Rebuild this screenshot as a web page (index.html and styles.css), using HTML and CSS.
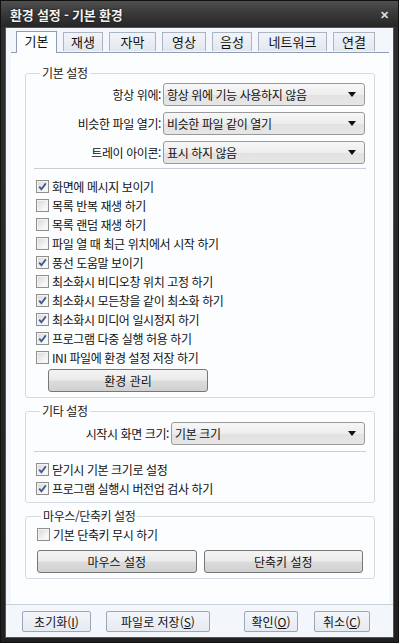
FILE: index.html
```html
<!DOCTYPE html>
<html lang="ko">
<head>
    <meta charset="UTF-8">
    <meta name="viewport" content="width=device-width, initial-scale=1.0">
    <title>환경 설정 - 기본 환경</title>
    <link rel="stylesheet" href="styles.css">
</head>
<body>

    <div class="window">
        <div class="titlebar">
            <span class="title">환경 설정 - 기본 환경</span>
            <span class="close">&#x2715;</span>
        </div>

        <div class="client">
            <div class="tabs">
                <div class="tab active">기본</div>
                <div class="tab">재생</div>
                <div class="tab">자막</div>
                <div class="tab">영상</div>
                <div class="tab">음성</div>
                <div class="tab">네트워크</div>
                <div class="tab">연결</div>
            </div>

            <div class="panel">
                <fieldset class="group group-basic">
                    <legend>기본 설정</legend>
                    <div class="field">
                        <label>항상 위에:</label>
                        <div class="select">항상 위에 기능 사용하지 않음<svg class="arrow" width="8" height="5" viewBox="0 0 8 5"><path d="M0 0H8L4 5Z"/></svg></div>
                    </div>
                    <div class="field">
                        <label>비슷한 파일 열기:</label>
                        <div class="select">비슷한 파일 같이 열기<svg class="arrow" width="8" height="5" viewBox="0 0 8 5"><path d="M0 0H8L4 5Z"/></svg></div>
                    </div>
                    <div class="field">
                        <label>트레이 아이콘:</label>
                        <div class="select">표시 하지 않음<svg class="arrow" width="8" height="5" viewBox="0 0 8 5"><path d="M0 0H8L4 5Z"/></svg></div>
                    </div>
                    <hr>
                    <ul class="checks">
                        <li><span class="cb on"></span>화면에 메시지 보이기</li>
                        <li><span class="cb"></span>목록 반복 재생 하기</li>
                        <li><span class="cb"></span>목록 랜덤 재생 하기</li>
                        <li><span class="cb"></span>파일 열 때 최근 위치에서 시작 하기</li>
                        <li><span class="cb on"></span>풍선 도움말 보이기</li>
                        <li><span class="cb"></span>최소화시 비디오창 위치 고정 하기</li>
                        <li><span class="cb on"></span>최소화시 모든창을 같이 최소화 하기</li>
                        <li><span class="cb on"></span>최소화시 미디어 일시정지 하기</li>
                        <li><span class="cb on"></span>프로그램 다중 실행 허용 하기</li>
                        <li><span class="cb"></span>INI 파일에 환경 설정 저장 하기</li>
                    </ul>
                    <button class="btn btn-manage">환경 관리</button>
                </fieldset>

                <fieldset class="group group-etc">
                    <legend>기타 설정</legend>
                    <div class="field">
                        <label>시작시 화면 크기:</label>
                        <div class="select">기본 크기<svg class="arrow" width="8" height="5" viewBox="0 0 8 5"><path d="M0 0H8L4 5Z"/></svg></div>
                    </div>
                    <hr>
                    <ul class="checks">
                        <li><span class="cb on"></span>닫기시 기본 크기로 설정</li>
                        <li><span class="cb on"></span>프로그램 실행시 버전업 검사 하기</li>
                    </ul>
                </fieldset>

                <fieldset class="group group-mouse">
                    <legend>마우스/단축키 설정</legend>
                    <ul class="checks">
                        <li><span class="cb"></span>기본 단축키 무시 하기</li>
                    </ul>
                    <div class="btn-row">
                        <button class="btn">마우스 설정</button>
                        <button class="btn">단축키 설정</button>
                    </div>
                </fieldset>
            </div>

            <div class="footer">
                <div class="footer-left">
                    <button class="fbtn btn-init">초기화(<u>I</u>)</button>
                    <button class="fbtn btn-save">파일로 저장(<u>S</u>)</button>
                </div>
                <div class="footer-right">
                    <button class="fbtn btn-ok">확인(<u>O</u>)</button>
                    <button class="fbtn btn-cancel">취소(<u>C</u>)</button>
                </div>
            </div>
        </div>
    </div>

</body>
</html>
```

FILE: styles.css
```css
* {
    box-sizing: border-box;
}
body {
    margin: 0;
    background: #1e1e1e;
    font-family: "Noto Sans CJK KR", "Noto Sans", sans-serif;
    font-size: 12px;
    letter-spacing: -0.4px;
    color: #111;
}
.window {
    width: 399px;
    height: 643px;
    display: flex;
    flex-direction: column;
    background: linear-gradient(#2e2e2e, #202020);
    border: 1px solid #111;
}
.titlebar {
    height: 26px;
    display: flex;
    align-items: center;
    justify-content: space-between;
    padding: 0 9px 0 9px;
    background: linear-gradient(#505050, #3a3a3a 45%, #262626);
    color: #f4f4f4;
}
.title {
    font-size: 13px;
    font-weight: bold;
    letter-spacing: -0.2px;
    text-shadow: 0 0 2px #000;
}
.close {
    font-size: 11px;
    font-weight: bold;
    color: #ddd;
}
.client {
    flex: 1;
    margin: 0 4px 4px 4px;
    display: flex;
    flex-direction: column;
    background: #f3f6fb;
    border: 1px solid #555;
}

/* tabs */
.tabs {
    height: 24px;
    padding: 3px 0 0 10px;
    display: grid;
    grid-template-columns: 41px 40px 47px 44px 40px 69px 42px;
    column-gap: 6px;
    align-items: end;
}
.tab {
    height: 19px;
    margin-bottom: 1px;
    border: 1px solid #aab4c3;
    border-bottom: 0;
    background: linear-gradient(#f1f4f9, #e2e7ef);
    font-size: 13px;
    letter-spacing: 0;
    text-align: center;
    line-height: 18px;
    color: #111;
}
.tab.active {
    height: 22px;
    margin-bottom: -1px;
    background: #fcfdfe;
    border-color: #8d9cb1;
    position: relative;
}
.panel {
    flex: 1;
    margin: 0 4px 0 5px;
    border-top: 1px solid #8d9cb1;
    background: #fcfdfe;
    padding-left: 14px;
}

/* group boxes */
.group {
    width: 350px;
    margin: 0;
    border: 1px solid #d3dbe4;
    border-radius: 3px;
    padding: 0 9px 5px 10px;
}
.group legend {
    padding: 0 2px;
    margin-left: 4px;
    line-height: 14px;
    color: #222;
}
.group-basic {
    margin-top: 13px;
    padding-top: 3px;
}
.group-etc {
    margin-top: 6px;
    padding-top: 4px;
    padding-bottom: 4px;
}
.group-mouse {
    margin-top: 6px;
    padding: 2px 11px 5px 11px;
}
.field {
    height: 23px;
    display: flex;
    justify-content: flex-end;
    align-items: center;
    gap: 2px;
    margin-bottom: 6px;
}
.field:last-of-type {
    margin-bottom: 0;
}
.group-basic .select {
    width: 202px;
}
.group-etc .select {
    width: 194px;
}
.select {
    height: 23px;
    display: flex;
    align-items: center;
    justify-content: space-between;
    padding: 0 8px 0 3px;
    border: 1px solid #9a9a9a;
    border-radius: 3px;
    background: linear-gradient(#f7f7f7, #ededed 50%, #e2e2e2 51%, #e6e6e6);
}
.arrow {
    fill: #111;
}
hr {
    border: 0;
    border-top: 1px solid #c9d0d9;
    margin: 4px -1px 0 -2px;
}
.group-etc hr {
    margin-top: 6px;
}
.checks {
    list-style: none;
    margin: 8px 0 0 0;
    padding: 0;
}
.group-mouse .checks {
    margin-top: 0;
}
.checks li {
    height: 19px;
    display: flex;
    align-items: center;
    gap: 3px;
}
.cb {
    width: 13px;
    height: 13px;
    flex: none;
    border: 1px solid #8f8f8f;
    background: linear-gradient(135deg, #d6d6d6, #f6f6f6 70%, #fff);
    box-shadow: inset 0 0 0 1px #f4f4f4;
}
.cb.on {
    background: url("data:image/svg+xml,%3Csvg xmlns='http://www.w3.org/2000/svg' width='11' height='11'%3E%3Cpath d='M2.2 5.6 L4.4 8.2 L8.8 2.4' fill='none' stroke='%23405a94' stroke-width='1.8'/%3E%3C/svg%3E") center no-repeat,
                linear-gradient(135deg, #d6d6d6, #f6f6f6 70%, #fff);
}

/* buttons */
.btn {
    height: 23px;
    font: inherit;
    color: #111;
    border: 1px solid #777;
    border-radius: 3px;
    background: linear-gradient(#f4f4f4, #ebebeb 48%, #dcdcdc 52%, #d0d0d0);
    padding: 0;
}
.btn-manage {
    width: 160px;
    margin: 2px 0 0 12px;
    display: block;
}
.btn-row {
    display: grid;
    grid-template-columns: 1fr 1fr;
    column-gap: 7px;
    margin-top: 6px;
}

/* footer */
.footer {
    height: 33px;
    border-top: 1px solid #c8d0dc;
    display: flex;
    justify-content: space-between;
    align-items: center;
    padding: 0 23px 0 16px;
}
.footer-left,
.footer-right {
    display: flex;
    gap: 15px;
}
.footer-right {
    gap: 16px;
}
.fbtn {
    height: 21px;
    font: inherit;
    color: #111;
    padding: 0;
    border: 1px solid #9aa6ba;
    border-radius: 2px;
    background: linear-gradient(#f3f5f9, #e6eaf1);
}
.btn-init { width: 69px; }
.btn-save { width: 104px; }
.btn-ok { width: 54px; }
.btn-cancel { width: 56px; }
```
